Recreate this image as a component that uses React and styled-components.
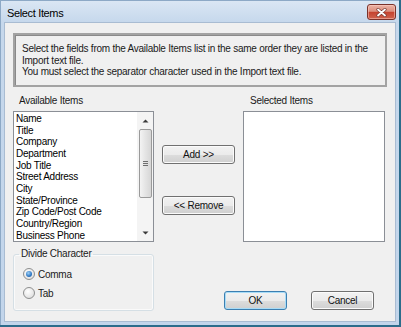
import React from 'react';
import styled, { createGlobalStyle } from 'styled-components';

const Global = createGlobalStyle`
  body {
    margin: 0;
    font-family: "Liberation Sans", Arial, sans-serif;
    font-size: 10px;
    letter-spacing: -0.25px;
    color: #000;
  }
`;

const Window = styled.div`
  width: 401px;
  height: 327px;
  box-sizing: border-box;
  display: flex;
  flex-direction: column;
  background: linear-gradient(#dbe7f4, #c6d8ec 22px, #c2d5eb);
  border-right: 2px solid #2c6c8b;
  border-bottom: 2px solid #2c6c8b;
  box-shadow: inset 1px 1px 0 #8da9c6;
`;

const TitleBar = styled.div`
  height: 22px;
  flex: none;
  display: flex;
  align-items: flex-start;
  padding: 0 3px 0 7px;
  box-sizing: border-box;
`;

const Title = styled.span`
  font-size: 11px;
  letter-spacing: -0.35px;
  line-height: 14px;
  margin-top: 6px;
`;

const CloseButton = styled.div`
  margin-left: auto;
  margin-top: 4px;
  width: 29px;
  height: 16px;
  box-sizing: border-box;
  border: 1px solid #7a322a;
  border-radius: 3px;
  background: linear-gradient(#ecb3a6 0%, #dc8f7e 45%, #c5432f 52%, #cf634e 100%);
  box-shadow: inset 0 0 0 1px rgba(255, 210, 200, 0.5);
  display: flex;
  align-items: center;
  justify-content: center;
`;

const Client = styled.div`
  flex: 1;
  margin: 0 3px 3px 4px;
  box-sizing: border-box;
  background: #f0f0f0;
  border: 1px solid #a9bcd2;
  padding: 10px 0 0 8px;
  display: flex;
  flex-direction: column;
`;

const InfoBox = styled.div`
  width: 374px;
  height: 54px;
  box-sizing: border-box;
  border: 2px solid #a3a3a3;
  box-shadow: inset 1px 1px 0 #8a8a8a;
  padding: 8px 0 0 7px;
  line-height: 11.6px;
  color: #1a1a1a;
`;

const Main = styled.div`
  margin-top: 8px;
  display: grid;
  grid-template-columns: 141px 73px 142px;
  grid-template-rows: 12px 131px 65px;
  column-gap: 8px;
  row-gap: 4px;
`;

const Label = styled.div`
  line-height: 12px;
  padding-left: ${p => p.$indent}px;
  color: #1a1a1a;
`;

const ListBox = styled.div`
  grid-row: 2;
  grid-column: ${p => p.$col};
  box-sizing: border-box;
  border: 1px solid #8b8f96;
  background: #fff;
  display: flex;
`;

const Items = styled.div`
  flex: 1;
  padding: 1px 0 0 2px;
  line-height: 11.67px;
  white-space: nowrap;
  overflow: hidden;
`;

const ScrollBar = styled.div`
  width: 16px;
  flex: none;
  background: #f4f4f4;
  display: flex;
  flex-direction: column;
  align-items: center;
`;

const Arrow = styled.div`
  height: 17px;
  flex: none;
  display: flex;
  align-items: center;
  justify-content: center;
  width: 100%;
`;

const Thumb = styled.div`
  width: 13px;
  height: 69px;
  box-sizing: border-box;
  border: 1px solid #9a9a9a;
  border-radius: 2px;
  background: linear-gradient(90deg, #f3f3f3, #e4e4e4 50%, #d6d6d6);
  display: flex;
  flex-direction: column;
  align-items: center;
  justify-content: center;
  gap: 1px;
`;

const Grip = styled.span`
  width: 5px;
  height: 1px;
  background: #6f6f6f;
`;

const Spacer = styled.div`
  flex: 1;
`;

const Middle = styled.div`
  grid-row: 2;
  grid-column: 2;
  display: flex;
  flex-direction: column;
  padding-top: 34px;
  gap: 32px;
`;

const Button = styled.div`
  width: ${p => p.$w}px;
  height: ${p => p.$h}px;
  box-sizing: border-box;
  border: 1px solid ${p => (p.$default ? '#3c7fb1' : '#707070')};
  border-radius: 3px;
  background: linear-gradient(#f2f2f2 0%, #ebebeb 50%, #dddddd 51%, #cfcfcf 100%);
  box-shadow: inset 0 0 0 1px ${p => (p.$default ? '#a8dcf7' : '#fbfbfb')};
  display: flex;
  align-items: center;
  justify-content: center;
  color: #111;
`;

const GroupBox = styled.fieldset`
  grid-row: 3;
  grid-column: 1;
  align-self: end;
  height: 63px;
  margin: 0;
  padding: 0 0 0 5px;
  min-width: 0;
  box-sizing: border-box;
  border: 1px solid #d5dfe5;
  border-radius: 3px;
  box-shadow: inset 0 0 0 1px #fafafa;
`;

const Legend = styled.legend`
  padding: 0 2px;
  line-height: 12px;
  color: #1a1a1a;
`;

const Radios = styled.div`
  padding: 7px 0 0 4px;
  display: flex;
  flex-direction: column;
  gap: 5px;
`;

const RadioRow = styled.div`
  height: 14px;
  display: flex;
  align-items: center;
  gap: 3px;
  color: #1a1a1a;
`;

const RadioCircle = styled.span`
  width: 12px;
  height: 12px;
  box-sizing: border-box;
  border-radius: 50%;
  border: 1px solid #8e8f8f;
  background: radial-gradient(circle at 40% 35%, #ffffff, #e3e3e3 70%, #cfcfcf);
  display: flex;
  align-items: center;
  justify-content: center;
  &::after {
    content: '';
    width: 6px;
    height: 6px;
    border-radius: 50%;
    display: ${p => (p.$checked ? 'block' : 'none')};
    background: radial-gradient(circle at 40% 35%, #9ed0f6, #2f78c4 60%, #1b4f8e);
  }
`;

const Footer = styled.div`
  grid-row: 3;
  grid-column: 2 / 4;
  display: flex;
  justify-content: flex-end;
  align-items: flex-end;
  gap: 24px;
  padding: 0 11px 1px 0;
`;

const fields = [
  'Name',
  'Title',
  'Company',
  'Department',
  'Job Title',
  'Street Address',
  'City',
  'State/Province',
  'Zip Code/Post Code',
  'Country/Region',
  'Business Phone',
];

const CloseIcon = () => (
  <svg width="11" height="9" viewBox="0 0 11 9">
    <path d="M2 1.5 L9 7.5 M9 1.5 L2 7.5" stroke="#7a3a33" strokeWidth="3.2" strokeLinecap="round" />
    <path d="M2 1.5 L9 7.5 M9 1.5 L2 7.5" stroke="#ffffff" strokeWidth="1.8" strokeLinecap="round" />
  </svg>
);

const ArrowIcon = ({ down }) => (
  <svg width="7" height="4" viewBox="0 0 7 4">
    <path d={down ? 'M0.5 0.5 L6.5 0.5 L3.5 3.5 Z' : 'M0.5 3.5 L6.5 3.5 L3.5 0.5 Z'} fill="#3a3a3a" />
  </svg>
);

export default function App() {
  return (
    <>
      <Global />
      <Window>
        <TitleBar>
          <Title>Select Items</Title>
          <CloseButton>
            <CloseIcon />
          </CloseButton>
        </TitleBar>
        <Client>
          <InfoBox>
            Select the fields from the Available Items list in the same order they are listed in the
            <br />
            Import text file.
            <br />
            You must select the separator character used in the Import text file.
          </InfoBox>
          <Main>
            <Label $indent={6}>Available Items</Label>
            <div />
            <Label $indent={7}>Selected Items</Label>
            <ListBox $col={1}>
              <Items>
                {fields.map(f => (
                  <div key={f}>{f}</div>
                ))}
              </Items>
              <ScrollBar>
                <Arrow>
                  <ArrowIcon />
                </Arrow>
                <Thumb>
                  <Grip />
                  <Grip />
                  <Grip />
                </Thumb>
                <Spacer />
                <Arrow>
                  <ArrowIcon down />
                </Arrow>
              </ScrollBar>
            </ListBox>
            <Middle>
              <Button $w={73} $h={19}>Add &gt;&gt;</Button>
              <Button $w={73} $h={19}>&lt;&lt; Remove</Button>
            </Middle>
            <ListBox $col={3} />
            <GroupBox>
              <Legend>Divide Character</Legend>
              <Radios>
                <RadioRow>
                  <RadioCircle $checked />
                  Comma
                </RadioRow>
                <RadioRow>
                  <RadioCircle />
                  Tab
                </RadioRow>
              </Radios>
            </GroupBox>
            <Footer>
              <Button $w={63} $h={19} $default>OK</Button>
              <Button $w={63} $h={19}>Cancel</Button>
            </Footer>
          </Main>
        </Client>
      </Window>
    </>
  );
}
